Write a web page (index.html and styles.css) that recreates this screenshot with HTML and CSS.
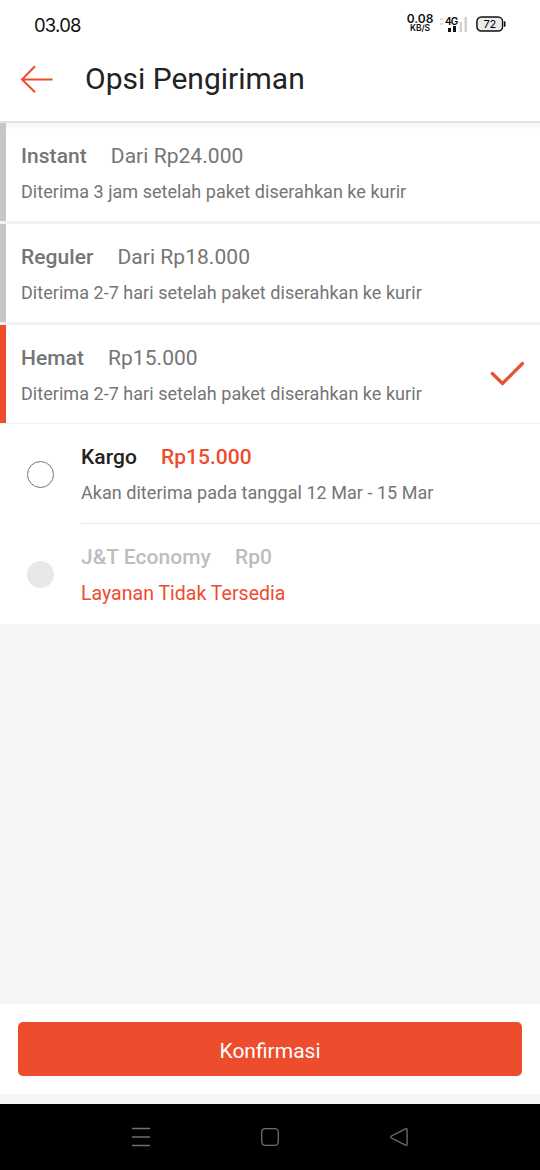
FILE: index.html
```html
<!DOCTYPE html>
<html lang="id">
<head>
<meta charset="utf-8">
<title>Opsi Pengiriman</title>
<link rel="stylesheet" href="styles.css">
</head>
<body>
<div class="screen">
  <div class="status">
    <span class="clock">03.08</span>
    <div class="net"><b>0.08</b><span>KB/S</span></div>
    <svg class="signal" width="30" height="20" viewBox="0 0 30 20">
      <path d="M1 6l1.500-2 1.500 2M1 9l1.500 2 1.500-2" fill="none" stroke="#c4c4c4"/>
      <text x="6" y="11" class="g4">4G</text>
      <path d="M9 14h3v4H9zM14 12h3v6h-3z" fill="#111"/>
      <path d="M20.500 8h2.500v10h-2.500zM25.500 3h2.500v15h-2.500z" fill="#d2d2d2"/>
    </svg>
    <svg class="battery" width="30" height="16" viewBox="0 0 30 16">
      <rect x=".9" y=".9" width="25.700" height="14.200" rx="4.500" fill="#ebebeb" stroke="#111" stroke-width="1.500"/>
      <path d="M28 5q1.500 0 1.500 1.500v3Q29.500 11 28 11z" fill="#111"/>
      <text x="13.700" y="12" text-anchor="middle" class="pct">72</text>
    </svg>
  </div>
  <header class="header">
    <svg class="back" width="34" height="30" viewBox="0 0 34 30"><path d="M15 2.300L2 15.500l13 12.700M2 15.500h30.500" fill="none" stroke="#ee4d2d" stroke-width="2"/></svg>
    <h1>Opsi Pengiriman</h1>
  </header>
  <main class="options">
    <section class="group first">
      <div class="line"><b>Instant</b><span>Dari Rp24.000</span></div>
      <p>Diterima 3 jam setelah paket diserahkan ke kurir</p>
    </section>
    <section class="group">
      <div class="line"><b>Reguler</b><span>Dari Rp18.000</span></div>
      <p>Diterima 2-7 hari setelah paket diserahkan ke kurir</p>
    </section>
    <section class="group active">
      <div>
        <div class="line"><b>Hemat</b><span>Rp15.000</span></div>
        <p>Diterima 2-7 hari setelah paket diserahkan ke kurir</p>
      </div>
      <svg class="check" width="36" height="26" viewBox="0 0 36 26"><path d="M3.300 12.500L13.500 22.500L33.500 2.500" fill="none" stroke="#e8502f" stroke-width="3.200" stroke-linecap="round"/></svg>
    </section>
    <section class="courier">
      <span class="radio"></span>
      <div class="detail ruled">
        <div class="line"><b>Kargo</b><b class="price">Rp15.000</b></div>
        <p>Akan diterima pada tanggal 12 Mar - 15 Mar</p>
      </div>
    </section>
    <section class="courier disabled">
      <span class="radio"></span>
      <div class="detail">
        <div class="line"><b>J&amp;T Economy</b><b>Rp0</b></div>
        <p class="error">Layanan Tidak Tersedia</p>
      </div>
    </section>
  </main>
  <footer class="footer"><button class="confirm">Konfirmasi</button></footer>
  <nav class="nav">
    <svg width="20" height="20" viewBox="0 0 20 20"><path d="M1 1.500h18M1 10h18M1 18.500h18"/></svg>
    <svg width="20" height="20" viewBox="0 0 20 20"><rect x="1.700" y="1.700" width="16.600" height="16.600" rx="3.500"/></svg>
    <svg width="20" height="20" viewBox="0 0 20 20"><path d="M16.500 1.800L2.400 9Q1 10 2.400 11l14.100 7.200q1.600.500 1.600-1V2.800q0-1.500-1.600-1z"/></svg>
  </nav>
</div>
</body>
</html>
```

FILE: styles.css
```css
* { box-sizing: border-box; }
body { margin: 0; font-family: Roboto, sans-serif; }
h1, p { margin: 0; font-weight: 400; }
.screen { width: 540px; height: 1170px; display: flex; flex-direction: column; background: #f5f5f5; overflow: hidden; }
.status { height: 48px; flex: none; display: flex; align-items: center; padding: 0 34px; background: #fff; color: #111; }
.clock { padding-top: 1px; font: 18.500px/24px Inter, sans-serif; letter-spacing: -.8px; }
.net { margin-left: auto; width: 28px; display: flex; flex-direction: column; align-items: center; font: 600 8.500px/10px Inter, sans-serif; letter-spacing: -.1px; }
.net b { font-size: 12px; line-height: 15px; height: 11px; margin-top: -4px; margin-bottom: 4px; font-weight: 600; letter-spacing: 0; }
.net span { margin-top: -3px; }
.signal { margin-left: 5px; }
.g4 { font: 600 10px Inter, sans-serif; letter-spacing: -.9px; }
.battery { margin-left: 7px; }
.pct { font: 11px Inter, sans-serif; letter-spacing: -.3px; }
.header { height: 75px; flex: none; display: flex; align-items: center; gap: 31px; padding: 1px 20px 12px; background: #fff; border-bottom: 2px solid #e2e2e2; }
.header h1 { font-size: 30px; line-height: 36px; color: #222; }
.options { background: #fff; }
.group { position: relative; height: 101px; display: flex; flex-direction: column; padding: 20px 15px 0; border-left: 6px solid #c6c6c6; color: #757575; }
.group:not(.active)::after { content: ""; position: absolute; left: -6px; right: 0; bottom: 0; height: 3px; background: #f1f1f1; }
.group.first { background: linear-gradient(#f5f5f5, #fff 7px); }
.group.active { height: 99px; flex-direction: row; justify-content: space-between; border-left-color: #ee4d2d; }
.group.active::after { content: ""; position: absolute; left: -6px; right: 0; bottom: 0; height: 1px; background: #f2f2f2; }
.check { margin-top: 16px; }
.line { display: flex; gap: 24px; font-size: 21px; line-height: 27px; letter-spacing: .05px; }
.line b { font-weight: 500; }
p { margin-top: 11px; font-size: 18px; line-height: 22px; letter-spacing: .04px; color: #757575; }
.courier { height: 100px; display: flex; align-items: center; padding-left: 27px; gap: 27px; color: #222; }
.radio { width: 27px; height: 27px; border: 1.500px solid #757575; border-radius: 50%; }
.detail { flex: 1; align-self: stretch; padding-top: 20px; }
.detail.ruled { border-bottom: 1px solid #e8e8e8; }
.price { color: #ee4d2d; }
.disabled { color: #bdbdbd; }
.disabled .radio { border: 0; background: #e8e8e8; }
.error { margin-top: 12px; font-size: 19.500px; letter-spacing: .02px; color: #ee4d2d; }
.footer { margin-top: auto; height: 90px; flex: none; padding: 18px; background: #fff; }
.confirm { display: block; width: 100%; height: 54px; padding: 3px 0 0; border: 0; border-radius: 5px; background: #ee4d2d; color: #fff; font: 21px Roboto, sans-serif; }
.nav { height: 66px; flex: none; margin-top: 10px; padding: 0 131px; display: flex; align-items: center; justify-content: space-between; background: #000; }
.nav svg { fill: none; stroke: #707070; stroke-width: 1.300; }
```
